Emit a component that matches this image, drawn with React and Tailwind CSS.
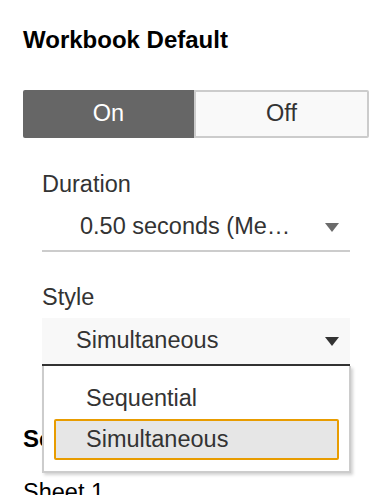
import React from "react";

const font = { fontFamily: '"Liberation Sans", Arial, sans-serif' };

function Caret({ dark }) {
  return (
    <svg width="14" height="9" viewBox="0 0 14 9" className="shrink-0">
      <path d="M0 0 L14 0 L7 9 Z" fill={dark ? "#333333" : "#6b6b6b"} />
    </svg>
  );
}

export default function App() {
  return (
    <div
      className="w-[391px] h-[495px] overflow-hidden bg-white pt-[26px] pl-[23px] text-[#333]"
      style={font}
    >
      <div className="text-[24px] leading-[28px] font-bold text-black">Workbook Default</div>

      <div className="mt-[36px] flex w-[346px] h-[48px] text-[23.5px]">
        <div className="flex-1 flex items-center justify-center bg-[#666666] text-white rounded-l-[2px]">
          On
        </div>
        <div className="flex-1 flex items-center justify-center bg-[#f9f9f9] border-2 border-[#cccccc] text-[#333] rounded-r-[2px]">
          Off
        </div>
      </div>

      <div className="ml-[19px] w-[308px]">
        <div className="mt-[32px] text-[23.5px] leading-[28px] text-[#333]">Duration</div>
        <div className="mt-[6px] h-[48px] flex items-center border-b-2 border-[#cccccc] pl-[38px] pr-[11px]">
          <span className="flex-1 text-[23.5px] text-[#333] whitespace-nowrap">0.50 seconds (Me…</span>
          <Caret />
        </div>

        <div className="mt-[31px] text-[23.5px] leading-[28px] text-[#333]">Style</div>
        <div className="relative mt-[7px]">
          <div className="h-[48px] flex items-center bg-[#f8f8f8] border-b-2 border-[#333333] pl-[34px] pr-[11px]">
            <span className="flex-1 text-[23.5px] text-[#333]">Simultaneous</span>
            <Caret dark />
          </div>
          <div className="absolute left-0 top-full w-[309px] h-[107px] bg-white border-2 border-t-0 border-[#cccccc] shadow-[2px_2px_3px_rgba(0,0,0,0.18)] pt-[13px] px-[10px] z-10">
            <div className="h-[40px] flex items-center pl-[32px] text-[23.5px] text-[#333]">Sequential</div>
            <div className="h-[41px] flex items-center pl-[30px] text-[23.5px] text-[#333] bg-[#e6e6e6] border-2 border-[#e89c00] rounded-[2px]">
              Simultaneous
            </div>
          </div>
        </div>
      </div>

      <div className="mt-[59px] text-[24px] leading-[28px] font-bold text-black">Sequence</div>
      <div className="mt-[25px] text-[23.5px] leading-[28px] text-black">Sheet 1</div>
    </div>
  );
}
